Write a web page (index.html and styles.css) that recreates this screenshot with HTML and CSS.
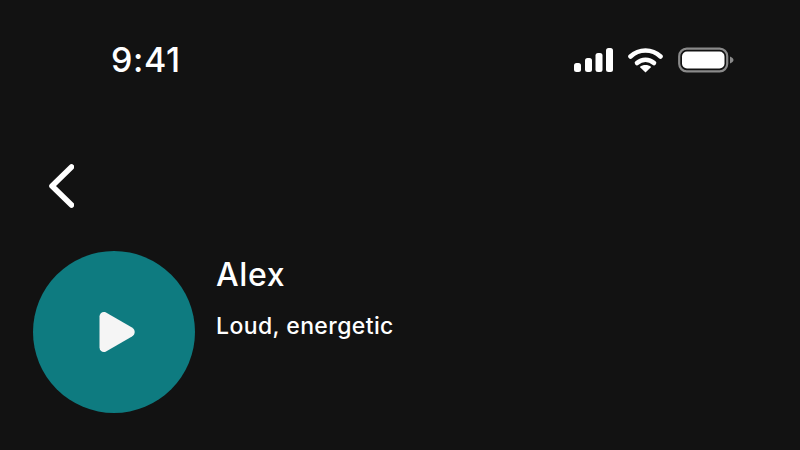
FILE: index.html
```html
<!DOCTYPE html>
<html lang="en">
<head>
  <meta charset="UTF-8">
  <meta name="viewport" content="width=device-width, initial-scale=1.0">
  <title>Alex</title>
  <link rel="stylesheet" href="styles.css">
</head>
<body>
  <div class="status-bar">
    <span class="time">9:41</span>
    <div class="status-icons">
      <svg class="signal" width="39" height="26" viewBox="0 0 39 26">
        <rect x="0" y="16" width="7" height="9" rx="2.5" fill="#fff"/>
        <rect x="11" y="11" width="7" height="14" rx="2.5" fill="#fff"/>
        <rect x="21.5" y="6" width="7" height="19" rx="2.5" fill="#fff"/>
        <rect x="32" y="1" width="7" height="24" rx="2.5" fill="#fff"/>
      </svg>
      <svg class="wifi" width="35" height="26" viewBox="0 0 35 26">
        <path d="M2.5 9.5C11 1.5 24 1.5 32.5 9.5" fill="none" stroke="#fff" stroke-width="4.6" stroke-linecap="round"/>
        <path d="M9 16C13.8 11.6 21.2 11.6 26 16" fill="none" stroke="#fff" stroke-width="4.6" stroke-linecap="round"/>
        <path d="M17.5 25.5L11.8 20C15 17.4 20 17.4 23.2 20Z" fill="#fff"/>
      </svg>
      <svg class="battery" width="56" height="26" viewBox="0 0 56 26">
        <rect x="1.2" y="1.7" width="48" height="22.6" rx="7.5" fill="none" stroke="#8a8a8a" stroke-width="2.2"/>
        <rect x="4" y="4.5" width="42.5" height="17" rx="5" fill="#fff"/>
        <path d="M52 9.5C54 10.3 55.5 11.5 55.5 13C55.5 14.5 54 15.7 52 16.5Z" fill="#8a8a8a"/>
      </svg>
    </div>
  </div>

  <button class="back">
    <svg width="26" height="44" viewBox="0 0 26 44">
      <path d="M23.5 3L4 22L23.5 41" fill="none" stroke="#fff" stroke-width="5.6" stroke-linecap="round" stroke-linejoin="round"/>
    </svg>
  </button>

  <div class="voice">
    <div class="play">
      <svg width="36" height="42" viewBox="0 0 36 42">
        <path d="M7 1.5L33 16.5C36.6 18.8 36.6 23.2 33 25.5L7 40.5C4 42 .5 40 .5 36.5V5.5C.5 2 4 0 7 1.5Z" fill="#f5f5f5"/>
      </svg>
    </div>
    <div class="info">
      <div class="name">Alex</div>
      <div class="desc">Loud, energetic</div>
    </div>
  </div>
</body>
</html>
```

FILE: styles.css
```css
body {
  margin: 0;
  width: 800px;
  height: 450px;
  overflow: hidden;
  background-color: #121212;
  color: #fff;
  font-family: Inter, "Noto Sans", sans-serif;
}

.status-bar {
  display: flex;
  justify-content: space-between;
  align-items: center;
  height: 40px;
  padding: 40px 66px 0 111px;
}

.time {
  font-size: 34px;
  font-weight: 500;
  line-height: 40px;
  letter-spacing: 0.6px;
}

.status-icons {
  display: flex;
  align-items: center;
  gap: 15px;
}

.status-icons svg {
  display: block;
}

.back {
  display: block;
  margin: 84px 0 0 48px;
  padding: 0;
  height: 44px;
  background: none;
  border: none;
}

.back svg {
  display: block;
}

.voice {
  display: flex;
  margin: 43px 0 0 33px;
}

.play {
  display: flex;
  justify-content: center;
  align-items: center;
  width: 162px;
  height: 162px;
  border-radius: 50%;
  background-color: #0e7b80;
}

.play svg {
  margin-left: 5px;
}

.info {
  margin-left: 21px;
}

.name {
  margin-top: 6px;
  font-size: 32px;
  line-height: 36px;
  font-weight: 500;
  letter-spacing: 0.6px;
}

.desc {
  margin-top: 20px;
  font-size: 23px;
  line-height: 26px;
  font-weight: 500;
  letter-spacing: 0.4px;
}
```
